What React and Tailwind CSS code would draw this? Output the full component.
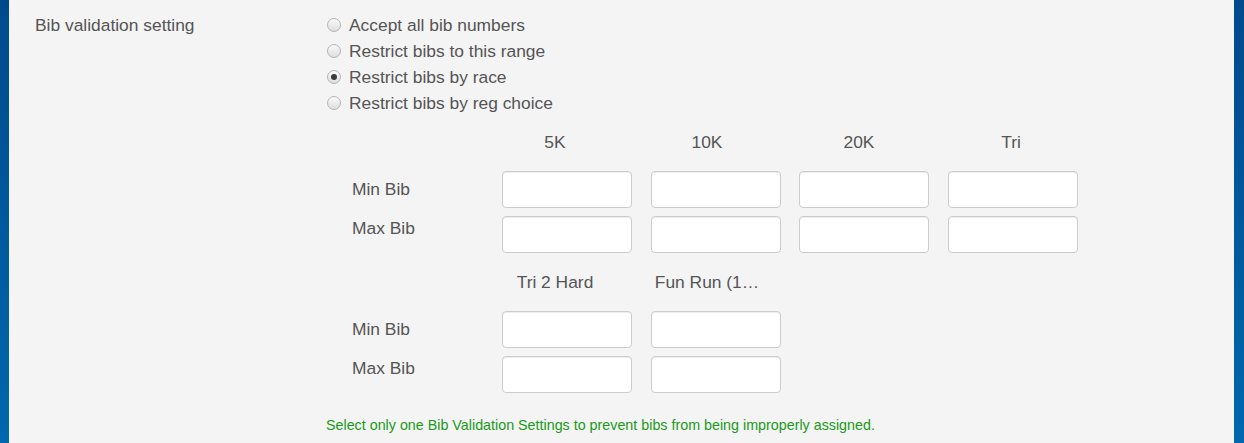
const options = [
  { label: "Accept all bib numbers", checked: false },
  { label: "Restrict bibs to this range", checked: false },
  { label: "Restrict bibs by race", checked: true },
  { label: "Restrict bibs by reg choice", checked: false },
];

const groups = [
  ["5K", "10K", "20K", "Tri"],
  ["Tri 2 Hard", "Fun Run (1…"],
];

function Radio({ checked }) {
  return (
    <span className="flex h-[14px] w-[14px] shrink-0 items-center justify-center rounded-full border border-[#b4b4b4] bg-gradient-to-b from-[#fafafa] to-[#dedede]">
      {checked && <span className="h-[6px] w-[6px] rounded-full bg-[#3a3a3a]" />}
    </span>
  );
}

function BibInput() {
  return (
    <input
      type="text"
      className="h-[37px] w-[130px] rounded-[4px] border border-[#cccccc] bg-white px-3 text-[#555] shadow-[inset_0_1px_1px_rgba(0,0,0,0.075)] outline-none"
    />
  );
}

function RaceGroup({ races }) {
  return (
    <div className="flex flex-col">
      <div className="flex h-[20px] items-center pl-[152px]">
        {races.map((race) => (
          <div key={race} className="w-[152px] whitespace-nowrap text-center">
            {race}
          </div>
        ))}
      </div>
      <div className="mt-[19px] flex flex-col gap-[8px]">
        {["Min Bib", "Max Bib"].map((label, i) => (
          <div key={label} className="flex">
            <div className={`w-[175px] pl-[25px] ${i === 0 ? "pt-[8px]" : "pt-[2px]"}`}>
              {label}
            </div>
            <div className="flex gap-[18.7px]">
              {races.map((race) => (
                <BibInput key={race} />
              ))}
            </div>
          </div>
        ))}
      </div>
    </div>
  );
}

export default function App() {
  return (
    <div
      className="flex h-[443px] w-[1244px] bg-gradient-to-b from-[#004a8c] to-[#0068ad] text-[17.4px] leading-[20px] text-[#555]"
      style={{ fontFamily: '"Liberation Sans", Arial, sans-serif' }}
    >
      <div className="ml-[9px] mr-[10px] flex flex-1 bg-[#f4f4f4] pt-[12px]">
        <div className="w-[318px] shrink-0 pl-[26px] pt-[3px]">Bib validation setting</div>
        <div className="flex flex-col">
          <div className="flex flex-col">
            {options.map((opt) => (
              <label key={opt.label} className="flex h-[26px] items-center gap-[8px]">
                <Radio checked={opt.checked} />
                <span>{opt.label}</span>
              </label>
            ))}
          </div>
          <div className="mt-[16px] flex flex-col gap-[19px]">
            {groups.map((races, i) => (
              <RaceGroup key={i} races={races} />
            ))}
          </div>
          <p className="-ml-[1px] mt-[24px] text-[14.3px] leading-[16px] text-[#1a9a1a]">
            Select only one Bib Validation Settings to prevent bibs from being improperly assigned.
          </p>
        </div>
      </div>
    </div>
  );
}
